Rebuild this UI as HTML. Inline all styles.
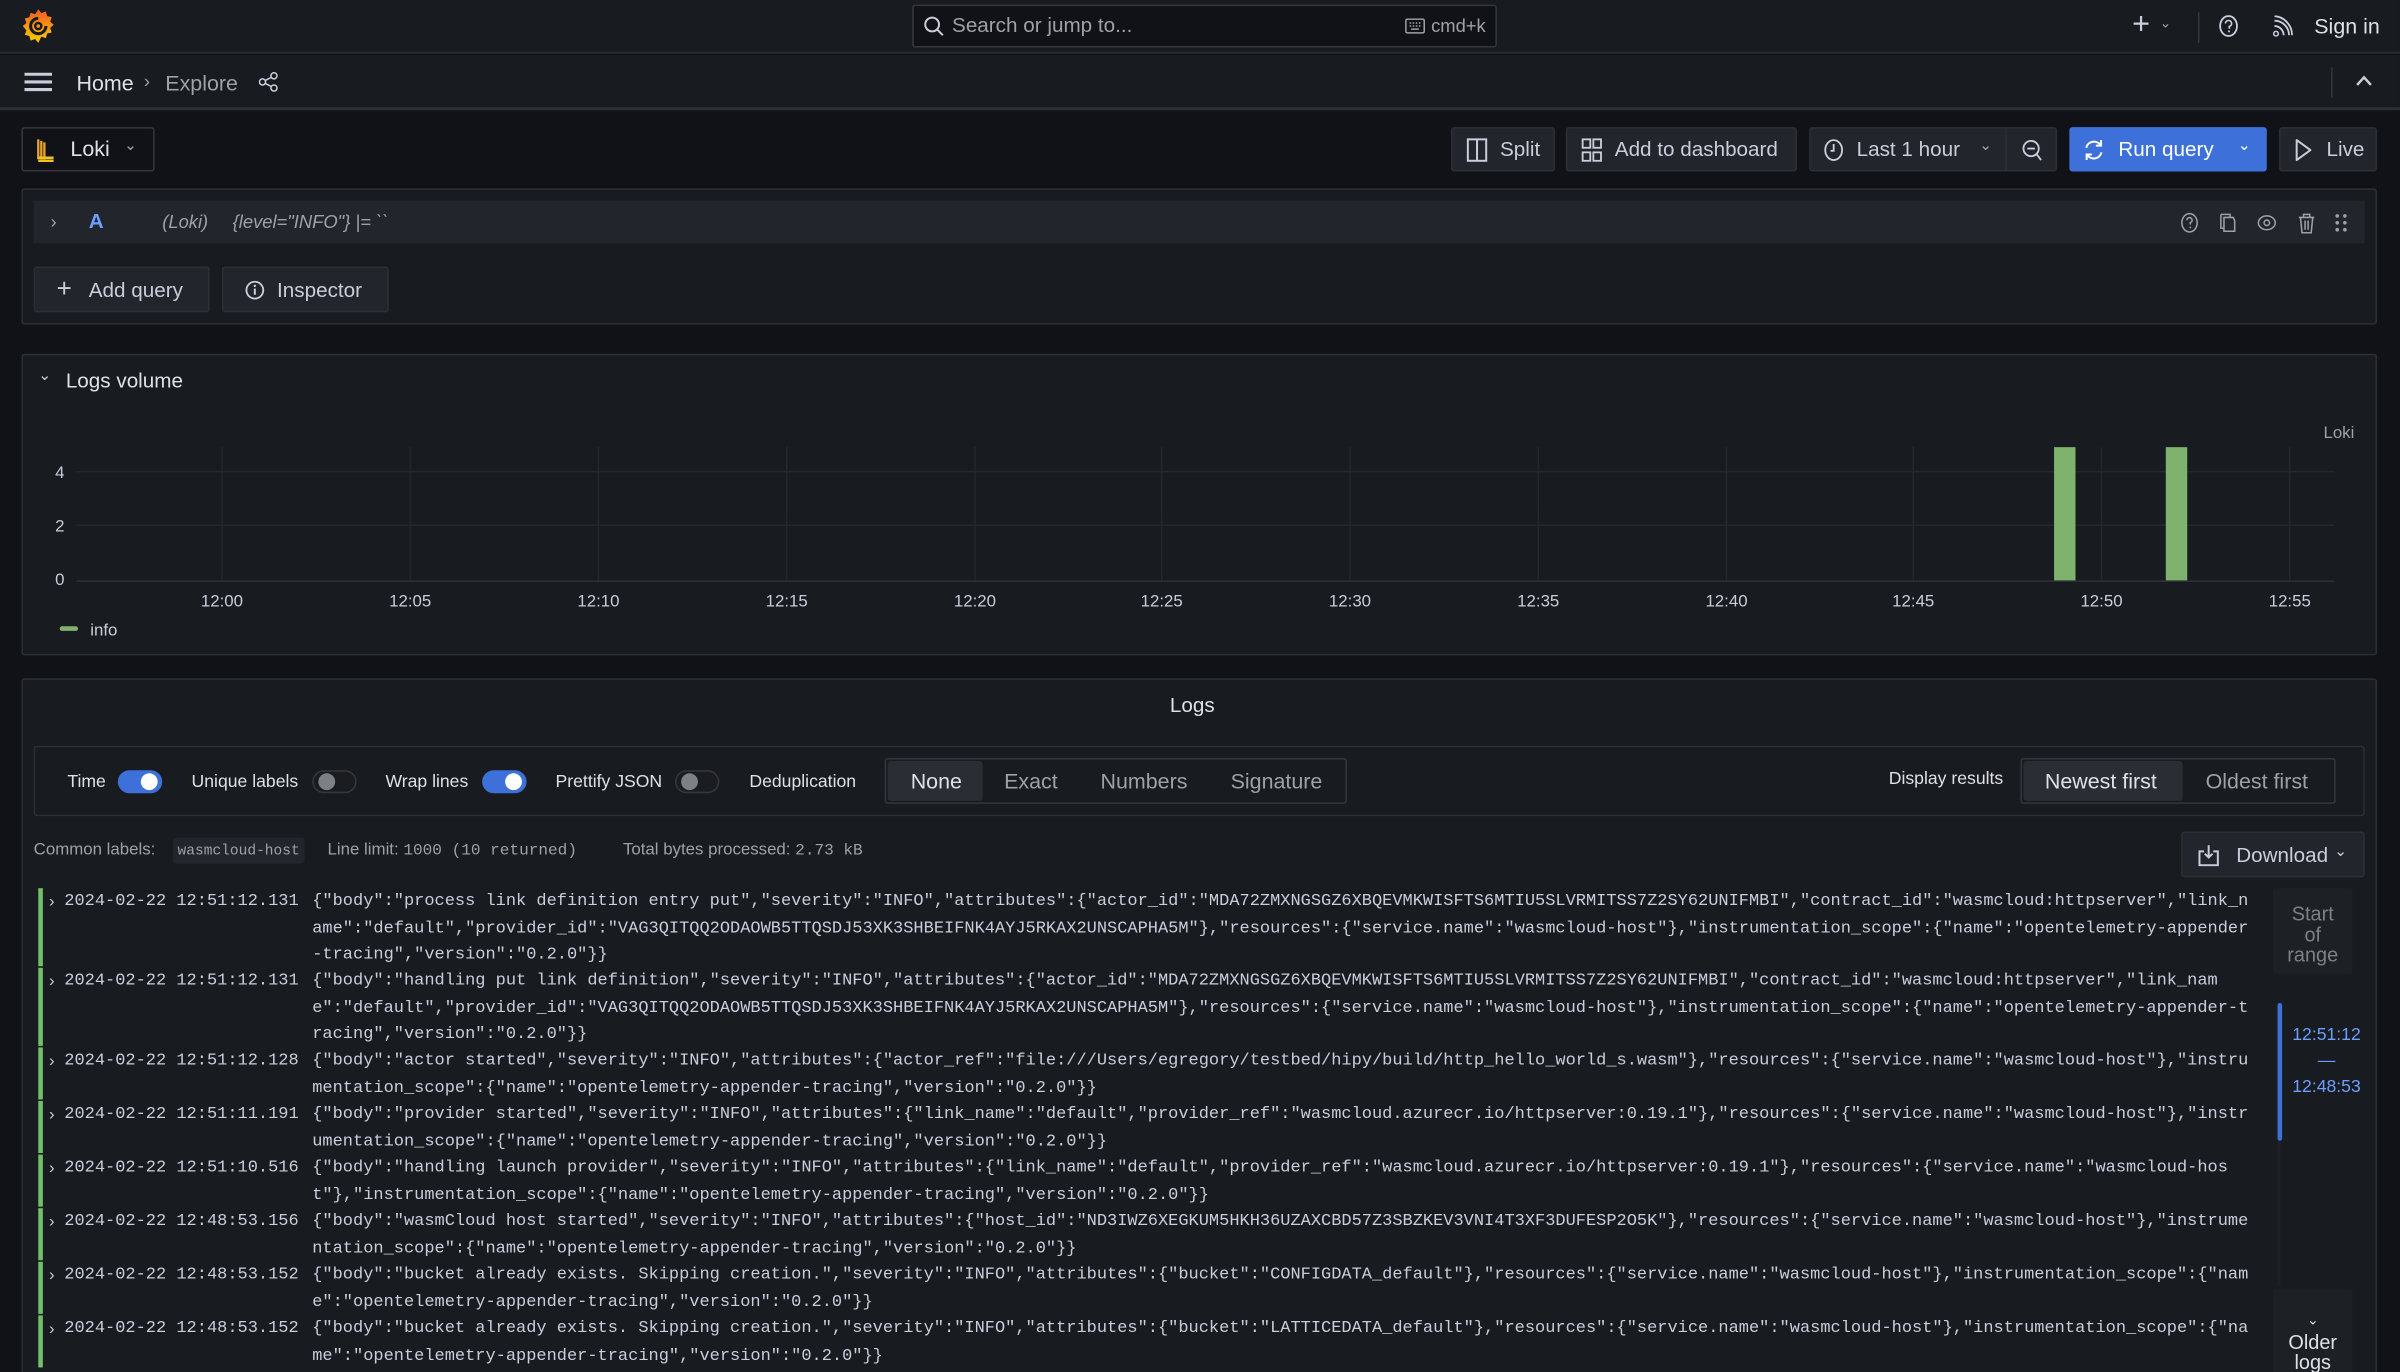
<!DOCTYPE html>
<html><head><meta charset="utf-8"><style>
*{box-sizing:border-box;margin:0;padding:0}
html,body{width:2400px;height:1372px;overflow:hidden;background:#111217}
#s{position:absolute;left:0;top:0;width:1568px;height:896px;transform:scale(1.5306,1.5313);transform-origin:0 0;background:#111217;font-family:"Liberation Sans",sans-serif;color:#ccccdc;font-size:13px;overflow:hidden}
.a{position:absolute}
.btn{position:absolute;background:#22252b;border:1px solid #2c2f35;border-radius:2px;color:#ccccdc;font-size:13.5px;display:flex;align-items:center;white-space:nowrap}
.mono{font-family:"Liberation Mono",monospace}
.log{position:absolute;left:24px;font-family:"Liberation Mono",monospace;font-size:11.1px;line-height:17.5px;color:#ccccdc;white-space:pre}
.log .bar{position:absolute;left:1px;top:0;width:3px;background:#73bf69}
.log .ts{position:absolute;left:18px;top:1px}
.log .ar{position:absolute;left:8px;top:1px;font-family:"Liberation Sans";font-size:11px}
.log .b{position:absolute;left:180px;top:1px}
.tg{display:inline-block;width:29px;height:15px;border-radius:8px;position:relative;vertical-align:middle}
.tg.on{background:#3d71d9}
.tg.off{background:#1a1c20;border:1px solid #34373c}
.tg i{position:absolute;top:2px;width:11px;height:11px;border-radius:50%}
.tg.on i{right:3px;background:#fff}
.tg.off i{left:3px;background:#7e8087;top:1px}
svg{position:absolute}
</style></head><body><div id="s">
<div class="a" style="left:0;top:0;width:1568px;height:35px;background:#181b1f;border-bottom:1px solid #2c2f35"></div>
<svg style="left:13px;top:5px" width="24" height="24" viewBox="0 0 24 24"><defs><linearGradient id="g" x1="0" y1="1" x2="0" y2="0"><stop offset="0" stop-color="#fcd000"/><stop offset="1" stop-color="#f05a28"/></linearGradient></defs><path d="M12 1l2 2.5 3-1 .8 3 3 .7-1 3 2.3 2-2.3 2 1 3-3 .7-.8 3-3-1L12 23l-2-2.5-3 1-.8-3-3-.7 1-3L1.9 12l2.3-2-1-3 3-.7.8-3 3 1z" fill="url(#g)"/><path d="M12 7a5 5 0 1 0 5 5" stroke="#181b1f" stroke-width="2" fill="none"/><circle cx="12" cy="12" r="2" fill="none" stroke="#181b1f" stroke-width="1.6"/></svg>
<div class="a" style="left:596px;top:3px;width:382px;height:28px;background:#111217;border:1px solid #34373c;border-radius:2px"></div>
<svg style="left:603px;top:10px" width="14" height="14" viewBox="0 0 14 14"><circle cx="6" cy="6" r="4.5" stroke="#ccccdc" stroke-width="1.3" fill="none"/><path d="M9.3 9.3L13 13" stroke="#ccccdc" stroke-width="1.3"/></svg>
<div class="a" style="left:622px;top:9px;font-size:13.5px;color:#9fa1a7">Search or jump to...</div>
<svg style="left:918px;top:12px" width="13" height="10" viewBox="0 0 13 10"><rect x=".5" y=".5" width="12" height="9" rx="1" stroke="#9fa1a7" fill="none"/><path d="M3 3h1M5 3h1M7 3h1M9 3h1M3 5h1M5 5h1M7 5h1M9 5h1M4 7h5" stroke="#9fa1a7"/></svg>
<div class="a" style="left:935px;top:10px;font-size:12px;color:#9fa1a7">cmd+k</div>
<div class="a" style="left:1393px;top:5px;font-size:20px;color:#ccccdc;font-weight:300">+</div>
<div class="a" style="left:1411px;top:10px;font-size:9px;color:#9fa1a7">⌄</div>
<div class="a" style="left:1436px;top:8px;width:1px;height:20px;background:#34373c"></div>
<svg style="left:1449px;top:9px" width="14" height="16" viewBox="0 0 14 16"><ellipse cx="7" cy="8" rx="5.5" ry="6.5" stroke="#ccccdc" stroke-width="1.2" fill="none"/><path d="M5 6.3a2 2 0 1 1 2.5 2v1.5" stroke="#ccccdc" stroke-width="1.1" fill="none"/><circle cx="7.3" cy="11.5" r=".7" fill="#ccccdc"/></svg>
<svg style="left:1485px;top:10px" width="13" height="14" viewBox="0 0 13 14"><circle cx="2" cy="12" r="1.5" stroke="#ccccdc" fill="none"/><path d="M1 7a6 6 0 0 1 6 6M1 3.5a9.5 9.5 0 0 1 9.5 9.5M1 .5a12.5 12.5 0 0 1 11.5 12.5" stroke="#ccccdc" stroke-width="1.2" fill="none"/></svg>
<div class="a" style="left:1512px;top:9px;font-size:14px;color:#e0e0e8">Sign in</div>
<div class="a" style="left:0;top:36px;width:1568px;height:36px;background:#181b1f;border-bottom:2px solid #2c2f35"></div>
<svg style="left:16px;top:47px" width="18" height="13" viewBox="0 0 18 13"><path d="M0 1.5h18M0 6.5h18M0 11.5h18" stroke="#ccccdc" stroke-width="2"/></svg>
<div class="a" style="left:50px;top:46px;font-size:14px;color:#e0e0e8">Home</div>
<div class="a" style="left:94px;top:46px;font-size:12px;color:#9fa1a7">›</div>
<div class="a" style="left:108px;top:46px;font-size:14px;color:#9fa1a7">Explore</div>
<svg style="left:169px;top:47px" width="13" height="13" viewBox="0 0 13 13"><circle cx="10" cy="2.5" r="2" stroke="#ccccdc" fill="none"/><circle cx="2.5" cy="6.5" r="2" stroke="#ccccdc" fill="none"/><circle cx="10" cy="10.5" r="2" stroke="#ccccdc" fill="none"/><path d="M4.3 5.5l4-2M4.3 7.5l4 2" stroke="#ccccdc"/></svg>
<div class="a" style="left:1523px;top:44px;width:1px;height:20px;background:#34373c"></div>
<svg style="left:1539px;top:49px" width="11" height="8" viewBox="0 0 11 8"><path d="M1 6.5l4.5-5 4.5 5" stroke="#ccccdc" stroke-width="1.6" fill="none"/></svg>
<div class="btn" style="left:14px;top:83px;width:87px;height:29px;background:#111217;border-color:#34373c">
<svg style="left:8px;top:6px" width="14" height="16" viewBox="0 0 14 16"><path d="M2 1v13M4 2v12M6 3v11" stroke="#e8a530" stroke-width="1.5"/><path d="M2 13h10M2 15h10" stroke="#f0c419" stroke-width="1.6"/></svg>
<span style="position:absolute;left:31px;top:5px;font-size:14px;color:#e0e0e8">Loki</span><span style="position:absolute;left:66px;top:6px;font-size:10px;color:#9fa1a7">⌄</span></div>
<div class="btn" style="left:948px;top:83px;width:68px;height:29px"><svg style="left:9px;top:6px" width="14" height="16" viewBox="0 0 14 16"><rect x="1" y="1" width="12" height="14" stroke="#ccccdc" stroke-width="1.3" fill="none"/><path d="M7 1v14" stroke="#ccccdc" stroke-width="1.3"/></svg><span style="position:absolute;left:31px;top:6px">Split</span></div>
<div class="btn" style="left:1023px;top:83px;width:151px;height:29px"><svg style="left:9px;top:6px" width="14" height="16" viewBox="0 0 14 16"><rect x="1" y="1" width="5" height="5.5" stroke="#ccccdc" stroke-width="1.2" fill="none"/><rect x="8" y="1" width="5" height="5.5" stroke="#ccccdc" stroke-width="1.2" fill="none"/><rect x="1" y="9.5" width="5" height="5.5" stroke="#ccccdc" stroke-width="1.2" fill="none"/><rect x="8" y="9.5" width="5" height="5.5" stroke="#ccccdc" stroke-width="1.2" fill="none"/></svg><span style="position:absolute;left:31px;top:6px">Add to dashboard</span></div>
<div class="btn" style="left:1182px;top:83px;width:162px;height:29px"><svg style="left:8px;top:6px" width="14" height="16" viewBox="0 0 14 16"><ellipse cx="7" cy="8" rx="5.5" ry="6.5" stroke="#ccccdc" stroke-width="1.2" fill="none"/><path d="M7 4v4.5H5" stroke="#ccccdc" stroke-width="1.2" fill="none"/></svg><span style="position:absolute;left:30px;top:6px">Last 1 hour</span><span style="position:absolute;left:110px;top:6px;font-size:10px;color:#9fa1a7">⌄</span><div style="position:absolute;left:127px;top:0;width:1px;height:27px;background:#2c2f35"></div><svg style="left:138px;top:6px" width="14" height="16" viewBox="0 0 14 16"><circle cx="6" cy="7" r="5" stroke="#ccccdc" stroke-width="1.2" fill="none"/><path d="M3.5 7h5M9.5 10.5l3 4" stroke="#ccccdc" stroke-width="1.2"/></svg></div>
<div class="btn" style="left:1352px;top:83px;width:129px;height:29px;background:#3d71d9;border-color:#3d71d9;color:#fff"><svg style="left:8px;top:6px" width="14" height="16" viewBox="0 0 14 16"><path d="M11.5 5A5.2 5.2 0 0 0 2 6.5M2.5 11A5.2 5.2 0 0 0 12 9.5M11.7 1.5v3.6H8.3M2.3 14.5v-3.6h3.4" stroke="#fff" stroke-width="1.3" fill="none"/></svg><span style="position:absolute;left:31px;top:6px">Run query</span><span style="position:absolute;left:109px;top:6px;font-size:10px">⌄</span></div>
<div class="btn" style="left:1489px;top:83px;width:64px;height:29px"><svg style="left:9px;top:6px" width="12" height="16" viewBox="0 0 12 16"><path d="M1.5 1.5v13l9-6.5z" stroke="#ccccdc" stroke-width="1.3" fill="none" stroke-linejoin="round"/></svg><span style="position:absolute;left:30px;top:6px">Live</span></div>
<div class="a" style="left:14px;top:123px;width:1539px;height:89px;background:#181b1f;border:1px solid #2c2f35;border-radius:2px"></div>
<div class="a" style="left:22px;top:131px;width:1523px;height:28px;background:#22252b"></div>
<div class="a" style="left:33px;top:138px;font-size:12px;color:#9fa1a7">›</div>
<div class="a" style="left:58px;top:137px;font-size:13.5px;color:#6e9fff;font-weight:bold">A</div>
<div class="a" style="left:106px;top:138px;font-size:12px;color:#9fa1a7;font-style:italic">(Loki)</div>
<div class="a" style="left:152px;top:138px;font-size:12px;color:#9fa1a7;font-style:italic">{level="INFO"} |= ``</div>
<svg style="left:1424px;top:138px" width="110" height="15" viewBox="0 0 110 15"><ellipse cx="6.5" cy="7.5" rx="5" ry="6" stroke="#9fa1a7" fill="none"/><path d="M4.8 5.8a1.7 1.7 0 1 1 2.2 1.6v1.3" stroke="#9fa1a7" fill="none"/><circle cx="7" cy="10.5" r=".6" fill="#9fa1a7"/><path d="M29 4h6l1 2v7h-7z M27 2h6v2M27 2v9h2" stroke="#9fa1a7" fill="none"/><ellipse cx="57" cy="7.5" rx="5.5" ry="4.5" stroke="#9fa1a7" fill="none"/><circle cx="57" cy="7.5" r="1.8" stroke="#9fa1a7" fill="none"/><path d="M78 4h10M81 4V2h4v2M79 4l1 10h6l1-10M82 6v6M84 6v6" stroke="#9fa1a7" fill="none"/><g fill="#9fa1a7"><circle cx="103" cy="3" r="1.2"/><circle cx="108" cy="3" r="1.2"/><circle cx="103" cy="7.5" r="1.2"/><circle cx="108" cy="7.5" r="1.2"/><circle cx="103" cy="12" r="1.2"/><circle cx="108" cy="12" r="1.2"/></g></svg>
<div class="btn" style="left:22px;top:174px;width:115px;height:30px"><span style="position:absolute;left:14px;top:4px;font-size:17px;font-weight:300">+</span><span style="position:absolute;left:35px;top:7px">Add query</span></div>
<div class="btn" style="left:145px;top:174px;width:109px;height:30px"><svg style="left:14px;top:8px" width="13" height="13" viewBox="0 0 13 13"><circle cx="6.5" cy="6.5" r="5.5" stroke="#ccccdc" stroke-width="1.2" fill="none"/><path d="M6.5 5.5v4" stroke="#ccccdc" stroke-width="1.3"/><circle cx="6.5" cy="3.7" r=".8" fill="#ccccdc"/></svg><span style="position:absolute;left:35px;top:7px">Inspector</span></div>
<div class="a" style="left:14px;top:231px;width:1539px;height:197px;background:#181b1f;border:1px solid #2c2f35;border-radius:2px"></div>
<div class="a" style="left:25px;top:240px;font-size:10px;color:#ccccdc">⌄</div>
<div class="a" style="left:43px;top:241px;font-size:13.5px;color:#e0e0e8;font-weight:500">Logs volume</div>
<div class="a" style="left:1518px;top:277px;font-size:11px;color:#9fa1a7">Loki</div>
<svg style="left:0;top:280px" width="1568" height="145" viewBox="0 280 1568 145">
<g stroke="#24272d" stroke-width="1"><path d="M145 292v88M268 292v88M391 292v88M514 292v88M637 292v88M759 292v88M882 292v88M1005 292v88M1128 292v88M1250 292v88M1373 292v88M1496 292v88"/><path d="M50 308h1475M50 343h1475"/></g>
<path d="M50 379.5h1475" stroke="#2f3237"/>
<rect x="1342" y="292" width="14" height="87" fill="#7eb26d"/><rect x="1415" y="292" width="14" height="87" fill="#7eb26d"/>
<g font-family="Liberation Sans" font-size="11" fill="#ccccdc"><text x="36" y="312">4</text><text x="36" y="347">2</text><text x="36" y="382">0</text>
<g text-anchor="middle"><text x="145" y="396">12:00</text><text x="268" y="396">12:05</text><text x="391" y="396">12:10</text><text x="514" y="396">12:15</text><text x="637" y="396">12:20</text><text x="759" y="396">12:25</text><text x="882" y="396">12:30</text><text x="1005" y="396">12:35</text><text x="1128" y="396">12:40</text><text x="1250" y="396">12:45</text><text x="1373" y="396">12:50</text><text x="1496" y="396">12:55</text></g>
<rect x="39" y="409" width="12" height="3" rx="1.5" fill="#7eb26d"/><text x="59" y="415">info</text></g>
</svg>
<div class="a" style="left:14px;top:443px;width:1539px;height:460px;background:#181b1f;border:1px solid #2c2f35;border-radius:2px"></div>
<div class="a" style="left:0;top:453px;width:1558px;text-align:center;font-size:13.5px;color:#e0e0e8;font-weight:500">Logs</div>
<div class="a" style="left:22px;top:487px;width:1523px;height:46px;border:1px solid #2c2f35;border-radius:2px"></div>
<div class="a" style="left:44px;top:503px;font-size:11.5px;color:#e0e0e8;white-space:nowrap;display:flex;align-items:center;gap:0">
<span>Time</span><span class="tg on" style="margin-left:8px"><i></i></span>
<span style="margin-left:19px">Unique labels</span><span class="tg off" style="margin-left:9px"><i></i></span>
<span style="margin-left:19px">Wrap lines</span><span class="tg on" style="margin-left:9px"><i></i></span>
<span style="margin-left:19px">Prettify JSON</span><span class="tg off" style="margin-left:8px"><i></i></span>
<span style="margin-left:20px">Deduplication</span></div>
<div class="a" style="left:578px;top:495px;width:302px;height:30px;border:1px solid #34373c;border-radius:2px"></div>
<div class="a" style="left:580px;top:497px;width:62px;height:26px;background:#2a2d33;border-radius:2px"></div>
<div class="a" style="left:595px;top:502px;font-size:14px;color:#e0e0e8">None</div>
<div class="a" style="left:656px;top:502px;font-size:14px;color:#9fa1a7">Exact</div>
<div class="a" style="left:719px;top:502px;font-size:14px;color:#9fa1a7">Numbers</div>
<div class="a" style="left:804px;top:502px;font-size:14px;color:#9fa1a7">Signature</div>
<div class="a" style="left:1234px;top:503px;font-size:11.5px;color:#e0e0e8">Display results</div>
<div class="a" style="left:1320px;top:495px;width:206px;height:30px;border:1px solid #34373c;border-radius:2px"></div>
<div class="a" style="left:1322px;top:497px;width:104px;height:26px;background:#2a2d33;border-radius:2px"></div>
<div class="a" style="left:1336px;top:502px;font-size:14px;color:#e0e0e8">Newest first</div>
<div class="a" style="left:1441px;top:502px;font-size:14px;color:#9fa1a7">Oldest first</div>
<div class="a" style="left:22px;top:549px;font-size:11px;color:#9fa1a7;white-space:nowrap">Common labels:</div>
<div class="a mono" style="left:113px;top:547px;height:17px;padding:3px 3px;background:#22252b;font-size:9.5px;color:#9fa1a7;border-radius:2px">wasmcloud-host</div>
<div class="a" style="left:214px;top:549px;font-size:11px;color:#9fa1a7;white-space:nowrap">Line limit: <span class="mono" style="font-size:10.5px">1000 (10 returned)</span></div>
<div class="a" style="left:407px;top:549px;font-size:11px;color:#9fa1a7;white-space:nowrap">Total bytes processed: <span class="mono" style="font-size:10.5px">2.73 kB</span></div>
<div class="btn" style="left:1425px;top:543px;width:120px;height:30px"><svg style="left:10px;top:7px" width="14" height="15" viewBox="0 0 14 15"><path d="M4 5H1v9h12V5h-3M7 1v8M4.5 6.5L7 9l2.5-2.5" stroke="#ccccdc" stroke-width="1.3" fill="none"/></svg><span style="position:absolute;left:35px;top:7px">Download</span><span style="position:absolute;left:99px;top:7px;font-size:10px">⌄</span></div>
<div class="a" style="left:1485px;top:580px;width:52px;height:56px;background:#1d2025;border-radius:2px;color:#7e8087;font-size:13px;text-align:center;line-height:13.5px;padding-top:10px">Start<br>of<br>range</div>
<div class="a" style="left:1488px;top:655px;width:3px;height:90px;background:#3d71d9;border-radius:2px"></div>
<div class="a" style="left:1496px;top:668px;font-size:11.5px;color:#6e9fff;line-height:17px;text-align:center;width:48px">12:51:12<br>—<br>12:48:53</div>
<div class="a" style="left:1488px;top:745px;width:2px;height:95px;background:#1e2025"></div>
<div class="a" style="left:1485px;top:842px;width:52px;height:60px;background:#1d2025;border-radius:2px;color:#e0e0e8;font-size:13px;text-align:center;line-height:13.5px;padding-top:12px"><span style="font-size:9px">⌄</span><br>Older<br>logs</div>
<div class="log" style="top:580px;height:51px"><div class="bar" style="height:51px"></div><span class="ar">›</span><span class="ts">2024-02-22 12:51:12.131</span><span class="b">{"body":"process link definition entry put","severity":"INFO","attributes":{"actor_id":"MDA72ZMXNGSGZ6XBQEVMKWISFTS6MTIU5SLVRMITSS7Z2SY62UNIFMBI","contract_id":"wasmcloud:httpserver","link_n
ame":"default","provider_id":"VAG3QITQQ2ODAOWB5TTQSDJ53XK3SHBEIFNK4AYJ5RKAX2UNSCAPHA5M"},"resources":{"service.name":"wasmcloud-host"},"instrumentation_scope":{"name":"opentelemetry-appender
-tracing","version":"0.2.0"}}</span></div>
<div class="log" style="top:632px;height:51px"><div class="bar" style="height:51px"></div><span class="ar">›</span><span class="ts">2024-02-22 12:51:12.131</span><span class="b">{"body":"handling put link definition","severity":"INFO","attributes":{"actor_id":"MDA72ZMXNGSGZ6XBQEVMKWISFTS6MTIU5SLVRMITSS7Z2SY62UNIFMBI","contract_id":"wasmcloud:httpserver","link_nam
e":"default","provider_id":"VAG3QITQQ2ODAOWB5TTQSDJ53XK3SHBEIFNK4AYJ5RKAX2UNSCAPHA5M"},"resources":{"service.name":"wasmcloud-host"},"instrumentation_scope":{"name":"opentelemetry-appender-t
racing","version":"0.2.0"}}</span></div>
<div class="log" style="top:684px;height:34px"><div class="bar" style="height:34px"></div><span class="ar">›</span><span class="ts">2024-02-22 12:51:12.128</span><span class="b">{"body":"actor started","severity":"INFO","attributes":{"actor_ref":"file:///Users/egregory/testbed/hipy/build/http_hello_world_s.wasm"},"resources":{"service.name":"wasmcloud-host"},"instru
mentation_scope":{"name":"opentelemetry-appender-tracing","version":"0.2.0"}}</span></div>
<div class="log" style="top:719px;height:34px"><div class="bar" style="height:34px"></div><span class="ar">›</span><span class="ts">2024-02-22 12:51:11.191</span><span class="b">{"body":"provider started","severity":"INFO","attributes":{"link_name":"default","provider_ref":"wasmcloud.azurecr.io/httpserver:0.19.1"},"resources":{"service.name":"wasmcloud-host"},"instr
umentation_scope":{"name":"opentelemetry-appender-tracing","version":"0.2.0"}}</span></div>
<div class="log" style="top:754px;height:34px"><div class="bar" style="height:34px"></div><span class="ar">›</span><span class="ts">2024-02-22 12:51:10.516</span><span class="b">{"body":"handling launch provider","severity":"INFO","attributes":{"link_name":"default","provider_ref":"wasmcloud.azurecr.io/httpserver:0.19.1"},"resources":{"service.name":"wasmcloud-hos
t"},"instrumentation_scope":{"name":"opentelemetry-appender-tracing","version":"0.2.0"}}</span></div>
<div class="log" style="top:789px;height:34px"><div class="bar" style="height:34px"></div><span class="ar">›</span><span class="ts">2024-02-22 12:48:53.156</span><span class="b">{"body":"wasmCloud host started","severity":"INFO","attributes":{"host_id":"ND3IWZ6XEGKUM5HKH36UZAXCBD57Z3SBZKEV3VNI4T3XF3DUFESP2O5K"},"resources":{"service.name":"wasmcloud-host"},"instrume
ntation_scope":{"name":"opentelemetry-appender-tracing","version":"0.2.0"}}</span></div>
<div class="log" style="top:824px;height:34px"><div class="bar" style="height:34px"></div><span class="ar">›</span><span class="ts">2024-02-22 12:48:53.152</span><span class="b">{"body":"bucket already exists. Skipping creation.","severity":"INFO","attributes":{"bucket":"CONFIGDATA_default"},"resources":{"service.name":"wasmcloud-host"},"instrumentation_scope":{"nam
e":"opentelemetry-appender-tracing","version":"0.2.0"}}</span></div>
<div class="log" style="top:859px;height:34px"><div class="bar" style="height:34px"></div><span class="ar">›</span><span class="ts">2024-02-22 12:48:53.152</span><span class="b">{"body":"bucket already exists. Skipping creation.","severity":"INFO","attributes":{"bucket":"LATTICEDATA_default"},"resources":{"service.name":"wasmcloud-host"},"instrumentation_scope":{"na
me":"opentelemetry-appender-tracing","version":"0.2.0"}}</span></div>
</div></body></html>
